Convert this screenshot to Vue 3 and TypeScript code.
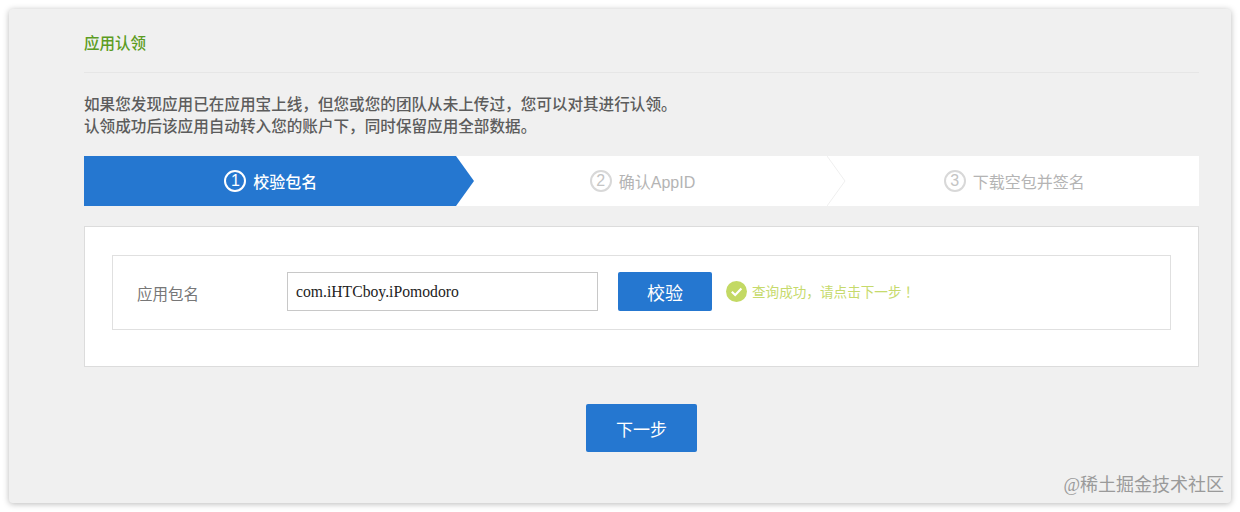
<script setup lang="ts">
interface Step { n: number; label: string; active: boolean }
const steps: Step[] = [
  { n: 1, label: '校验包名', active: true },
  { n: 2, label: '确认AppID', active: false },
  { n: 3, label: '下载空包并签名', active: false },
]
</script>

<template>
  <div class="page">
    <main class="card">
      <h1 class="title">应用认领</h1>
      <p class="intro">如果您发现应用已在应用宝上线，但您或您的团队从未上传过，您可以对其进行认领。<br />认领成功后该应用自动转入您的账户下，同时保留应用全部数据。</p>

      <div class="steps">
        <div v-for="s in steps" :key="s.n" class="step" :class="{ active: s.active }">
          <span class="num">{{ s.n }}</span>
          <span class="label">{{ s.label }}</span>
          <svg v-if="s.active" class="tip" width="19" height="50" viewBox="0 0 19 50"><path d="M0 0L18 25L0 50Z" fill="#2577d0" /></svg>
          <svg v-if="s.n === 2" class="tip" width="19" height="50" viewBox="0 0 19 50"><path d="M0 0L18 25L0 50" fill="none" stroke="#efefef" stroke-width="1" /></svg>
        </div>
      </div>

      <section class="panel">
        <div class="row">
          <span class="field-label">应用包名</span>
          <div class="input">com.iHTCboy.iPomodoro</div>
          <button class="btn check" type="button">校验</button>
          <svg class="ok" width="21" height="21" viewBox="0 0 21 21">
            <circle cx="10.5" cy="10.5" r="10.5" fill="#c3d964" />
            <path d="M5.8 10.8L9.2 14L15.4 7.6" fill="none" stroke="#fff" stroke-width="2.2" />
          </svg>
          <span class="msg">查询成功，请点击下一步<span class="bang">！</span></span>
        </div>
      </section>

      <div class="actions">
        <button class="btn next" type="button">下一步</button>
      </div>
      <span class="mark">@稀土掘金技术社区</span>
    </main>
  </div>
</template>

<style>
body { background: #fff; }
</style>

<style scoped>
.page {
  width: 1240px;
  height: 512px;
  padding: 9px;
  box-sizing: border-box;
  font-family: "Liberation Serif", "Noto Sans CJK SC", serif;
}
.card {
  position: relative;
  height: 494px;
  width: 1222px;
  box-sizing: border-box;
  padding: 0 32px 0 75px;
  background: #f0f0f0;
  border-radius: 4px;
  box-shadow: 0 1px 6px rgba(0, 0, 0, 0.28);
}
.title {
  margin: 0;
  height: 64px;
  box-sizing: border-box;
  padding-top: 25px;
  font-size: 15.5px;
  line-height: 20px;
  font-weight: 500;
  color: #5c9c22;
  border-bottom: 1px solid #e6e6e6;
}
.intro {
  margin: 21px 0 0;
  font-size: 15.6px;
  line-height: 22px;
  font-weight: 500;
  color: #5c5c5c;
}
.steps {
  display: flex;
  height: 50px;
  margin-top: 18px;
  background: #fff;
}
.step {
  position: relative;
  flex: 1;
  display: flex;
  align-items: center;
  justify-content: center;
  gap: 7px;
  padding-left: 2px;
  color: #b4b4b4;
  font-size: 16px;
  font-family: "Liberation Sans", "Noto Sans CJK SC", sans-serif;
}
.step.active {
  background: #2577d0;
  color: #fff;
  font-weight: 500;
}
.num {
  width: 22px;
  height: 22px;
  box-sizing: border-box;
  border: 2px solid #d8d8d8;
  border-radius: 50%;
  display: flex;
  align-items: center;
  justify-content: center;
  font-size: 16px;
  font-weight: 400;
  color: #c4c4c4;
}
.active .num {
  border-color: #fff;
  color: #fff;
}
.tip {
  position: absolute;
  left: 100%;
  top: 0;
  z-index: 1;
}
.panel {
  margin-top: 20px;
  height: 141px;
  box-sizing: border-box;
  padding: 28px 27px;
  background: #fff;
  border: 1px solid #dcdcdc;
}
.row {
  height: 75px;
  box-sizing: border-box;
  display: flex;
  align-items: center;
  padding-left: 24px;
  border: 1px solid #e0e0e0;
}
.field-label {
  width: 150px;
  font-size: 15.5px;
  color: #777;
}
.input {
  width: 311px;
  height: 39px;
  box-sizing: border-box;
  padding-left: 8px;
  margin-bottom: 2px;
  border: 1px solid #c8c8c8;
  font-size: 15.7px;
  line-height: 37px;
  color: #222;
}
.btn {
  border: 0;
  border-radius: 2px;
  background: #2577d0;
  color: #fff;
  padding: 0;
  font-family: inherit;
}
.check {
  width: 94px;
  height: 39px;
  margin: 0 0 2px 20px;
  font-size: 18px;
}
.ok {
  margin: 0 0 2px 14px;
  flex: none;
}
.msg {
  margin: 0 0 3px 5px;
  font-size: 13.6px;
  color: #c6da6c;
}
.bang {
  font-family: "Noto Sans CJK TC", sans-serif;
}
.actions {
  display: flex;
  justify-content: center;
  margin-top: 37px;
}
.next {
  width: 111px;
  height: 48px;
  font-size: 17px;
}
.mark {
  position: absolute;
  right: 7px;
  bottom: 6px;
  font-size: 18px;
  line-height: 24px;
  color: #9a9a9a;
}
</style>
